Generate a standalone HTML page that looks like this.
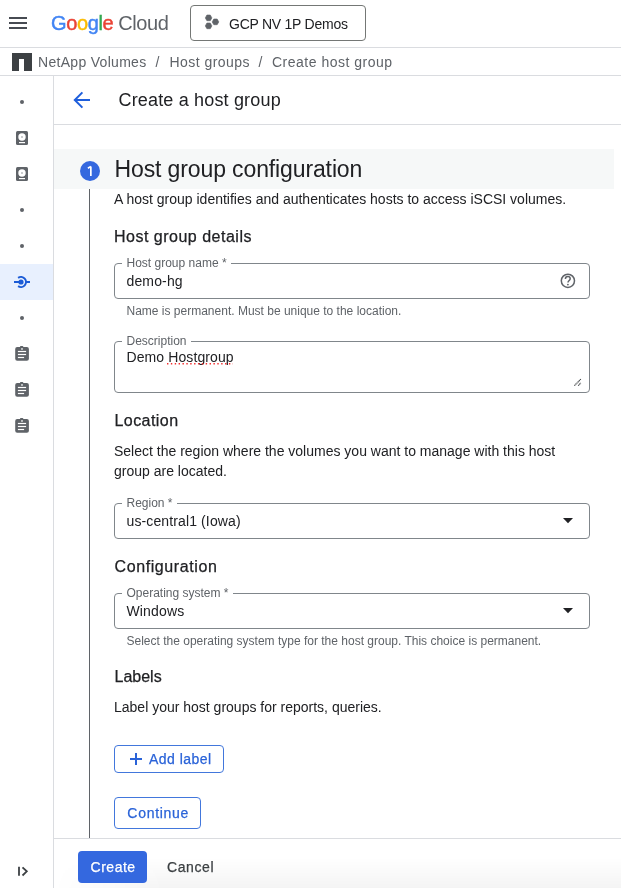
<!DOCTYPE html>
<html><head><meta charset="utf-8">
<style>
*{box-sizing:border-box;margin:0;padding:0}
html,body{will-change:transform;width:621px;height:888px;overflow:hidden;background:#fff;font-family:"Liberation Sans",sans-serif;color:#202124}
.a{position:absolute;white-space:nowrap;line-height:1}
.hl{position:absolute;background:#dadce0}
.box{position:absolute;border:1px solid #80868b;border-radius:4px}
.lbl{position:absolute;white-space:nowrap;line-height:1;font-size:12px;color:#5f6368;background:#fff;padding:0 4px 0 4.5px}
.ic{position:absolute;display:block}
.m{-webkit-text-stroke:0.25px currentColor}
</style></head><body>
<!-- top bar -->
<svg class="ic" style="left:0;top:0" width="40" height="47">
  <rect x="9" y="17" width="18" height="2" fill="#474b52"/>
  <rect x="9" y="22" width="18" height="2" fill="#474b52"/>
  <rect x="9" y="27" width="18" height="2" fill="#474b52"/>
</svg>
<div class="a" style="left:51px;top:12.7px;font-size:20px;letter-spacing:-0.4px"><span style="-webkit-text-stroke:0.45px currentColor"><span style="color:#4285f4">G</span><span style="color:#ea4335">o</span><span style="color:#fbbc04">o</span><span style="color:#4285f4">g</span><span style="color:#34a853">l</span><span style="color:#ea4335">e</span></span><span style="color:#5f6368;margin-left:5px">Cloud</span></div>
<div class="box" style="left:190px;top:5px;width:176px;height:36px;border-color:#747775"></div>
<svg class="ic" style="left:200px;top:10px" width="25" height="25">
  <g fill="#5f6368" stroke="#5f6368" stroke-width="0.6" stroke-linejoin="round">
  <polygon points="6.9,5 10.3,5 11.9,7.9 10.3,10.7 6.9,10.7 5.3,7.9"/>
  <polygon points="13.8,9 17.2,9 18.8,11.9 17.2,14.7 13.8,14.7 12.2,11.9"/>
  <polygon points="6.9,13 10.3,13 11.9,15.9 10.3,18.7 6.9,18.7 5.3,15.9"/>
  </g>
</svg>
<div class="a" style="left:229px;top:16.6px;font-size:14px;letter-spacing:-0.25px;color:#202124">GCP NV 1P Demos</div>
<div class="hl" style="left:0;top:47px;width:621px;height:1px"></div>

<!-- breadcrumb -->
<div class="a" style="left:12px;top:53px;width:20px;height:18px;background:#3c4043"></div>
<div class="a" style="left:19px;top:59px;width:5px;height:12px;background:#fff"></div>
<div class="a" style="left:38px;top:55.3px;font-size:14px;letter-spacing:0.3px;color:#5f6368">NetApp Volumes</div>
<div class="a" style="left:155.5px;top:55.3px;font-size:14px;color:#5f6368">/</div>
<div class="a" style="left:169.5px;top:55.3px;font-size:14px;letter-spacing:0.45px;color:#5f6368">Host groups</div>
<div class="a" style="left:258.5px;top:55.3px;font-size:14px;color:#5f6368">/</div>
<div class="a" style="left:272px;top:55.3px;font-size:14px;letter-spacing:0.5px;color:#5f6368">Create host group</div>
<div class="hl" style="left:0;top:75px;width:621px;height:1px"></div>

<!-- sidebar -->
<div class="hl" style="left:53px;top:76px;width:1px;height:812px"></div>
<div class="a" style="left:0;top:264px;width:53px;height:36px;background:#e8f0fe"></div>
<svg class="ic" style="left:0;top:76px" width="53" height="812">
  <g fill="#5f6368">
    <circle cx="22" cy="26" r="2"/>
    <!-- disk 1 -->
    <rect x="16" y="55" width="12" height="14" rx="1.5"/>
    <rect x="16" y="91" width="12" height="14" rx="1.5"/>
    <circle cx="22" cy="134" r="2"/>
    <circle cx="22" cy="170" r="2"/>
    <circle cx="22" cy="242" r="2"/>
    <!-- clipboards -->
    <rect x="15.2" y="271" width="13.7" height="13.7" rx="2"/>
    <rect x="20" y="270" width="3.3" height="2" rx="0.8"/>
    <rect x="15.2" y="307" width="13.7" height="13.7" rx="2"/>
    <rect x="20" y="306" width="3.3" height="2" rx="0.8"/>
    <rect x="15.2" y="343" width="13.7" height="13.7" rx="2"/>
    <rect x="20" y="342" width="3.3" height="2" rx="0.8"/>
  </g>
  <g fill="#fff">
    <circle cx="22" cy="61" r="3.7"/>
    <rect x="19" y="66" width="6" height="1.2"/>
    <circle cx="22" cy="97" r="3.7"/>
    <rect x="19" y="102" width="6" height="1.2"/>
  </g>
  <g fill="#8a8d91"><circle cx="22" cy="61" r="0.8"/><circle cx="22" cy="97" r="0.8"/></g>
  <g fill="#fff">
    <rect x="21.1" y="272" width="1.8" height="1.9" fill="#c8cacc"/>
    <rect x="17.9" y="274.9" width="8.2" height="1.2"/>
    <rect x="17.9" y="277.9" width="8.2" height="1.2"/>
    <rect x="17.9" y="280.9" width="6.2" height="1.2"/>
    <rect x="21.1" y="308" width="1.8" height="1.9" fill="#c8cacc"/>
    <rect x="17.9" y="310.9" width="8.2" height="1.2"/>
    <rect x="17.9" y="313.9" width="8.2" height="1.2"/>
    <rect x="17.9" y="316.9" width="6.2" height="1.2"/>
    <rect x="21.1" y="344" width="1.8" height="1.9" fill="#c8cacc"/>
    <rect x="17.9" y="346.9" width="8.2" height="1.2"/>
    <rect x="17.9" y="349.9" width="8.2" height="1.2"/>
    <rect x="17.9" y="352.9" width="6.2" height="1.2"/>
  </g>
  <!-- active icon -->
  <g stroke="#1b5bd6" fill="none" stroke-width="2">
    <line x1="14" y1="206" x2="20" y2="206"/><line x1="25.5" y1="206" x2="30" y2="206"/>
    <path d="M18.1 201.9 A5 5 0 1 1 18.1 210.1"/>
  </g>
  <circle cx="21" cy="206" r="2.6" fill="#1b5bd6"/>
  <!-- collapse -->
  <g stroke="#3c4043" fill="none" stroke-width="1.8">
    <line x1="19" y1="790.7" x2="19" y2="799.7"/>
    <path d="M22.5 791.3 L26.8 795.3 L22.5 799.5"/>
  </g>
</svg>

<!-- page header -->
<svg class="ic" style="left:70px;top:88px" width="24" height="24">
  <path d="M20 12 H5.5 M12.4 4.4 L4.8 12 L12.4 19.6" stroke="#1f5fdc" stroke-width="2" fill="none"/>
</svg>
<div class="a" style="left:118.5px;top:91px;font-size:18px;letter-spacing:0.17px;color:#202124">Create a host group</div>
<div class="hl" style="left:54px;top:124px;width:567px;height:1px"></div>

<!-- step header -->
<div class="a" style="left:54px;top:149px;width:560px;height:40px;background:#f6f8f8"></div>
<svg class="ic" style="left:78px;top:159px" width="24" height="24"><circle cx="12" cy="12" r="10" fill="#3468df"/><path d="M12.85 7.4 V17 M9.9 9.3 L12.9 7.4" stroke="#fff" stroke-width="1.7" fill="none"/></svg>
<div class="a" style="left:114.5px;top:157.5px;font-size:23px;letter-spacing:-0.12px">Host group configuration</div>
<div class="a" style="left:89px;top:189px;width:1px;height:649px;background:#5f6368"></div>

<div class="a" style="left:114px;top:192.4px;font-size:14px">A host group identifies and authenticates hosts to access iSCSI volumes.</div>
<div class="a m" style="left:114px;top:228.7px;font-size:16px;letter-spacing:0.5px">Host group details</div>

<!-- host group name -->
<div class="box" style="left:114px;top:263px;width:476px;height:36px"></div>
<div class="lbl" style="left:122px;top:257.2px">Host group name *</div>
<div class="a" style="left:126.5px;top:274.2px;font-size:14px;letter-spacing:0.15px">demo-hg</div>
<svg class="ic" style="left:555px;top:268px" width="25" height="25">
  <circle cx="12.9" cy="12.8" r="6.6" stroke="#5f6368" stroke-width="1.5" fill="none"/>
  <path d="M10.4 10.9 C10.4 9.3 11.5 8.5 12.8 8.5 C14.1 8.5 15.2 9.4 15.2 10.7 C15.2 12.4 13 12.6 13 14.6" stroke="#5f6368" stroke-width="1.5" fill="none"/>
  <circle cx="12.9" cy="16.6" r="0.9" fill="#5f6368"/>
</svg>
<div class="a" style="left:126.5px;top:305.4px;font-size:12px;color:#5f6368">Name is permanent. Must be unique to the location.</div>

<!-- description -->
<div class="box" style="left:114px;top:341px;width:476px;height:52px"></div>
<div class="lbl" style="left:122px;top:335px">Description</div>
<div class="a" style="left:126.5px;top:350px;font-size:14px;letter-spacing:0.1px">Demo Hostgroup</div>
<svg class="ic" style="left:160px;top:358px" width="80" height="10"><line x1="7" y1="5.8" x2="73" y2="5.8" stroke="#f22c2c" stroke-width="1.4" stroke-dasharray="1.4 2.47"/></svg>
<svg class="ic" style="left:565px;top:370px" width="30" height="30">
  <path d="M9.4 15.6 L15.8 9.2 M13.2 15.6 L15.8 13" stroke="#3c4043" stroke-width="1.2" stroke-dasharray="1.1 0.5" fill="none"/>
</svg>

<!-- location -->
<div class="a m" style="left:114.5px;top:412.9px;font-size:16px;letter-spacing:0.44px">Location</div>
<div class="a" style="left:114px;top:443.5px;font-size:14px">Select the region where the volumes you want to manage with this host</div>
<div class="a" style="left:114px;top:464px;font-size:14px">group are located.</div>

<div class="box" style="left:114px;top:503px;width:476px;height:36px"></div>
<div class="lbl" style="left:122px;top:496.7px">Region *</div>
<div class="a" style="left:126.5px;top:514.4px;font-size:14px;letter-spacing:0.12px">us-central1 (Iowa)</div>
<svg class="ic" style="left:560px;top:515px" width="16" height="12"><polygon points="3,3 13,3 8,8.3" fill="#202124"/></svg>

<!-- configuration -->
<div class="a m" style="left:114.5px;top:559.4px;font-size:16px;letter-spacing:0.6px">Configuration</div>
<div class="box" style="left:114px;top:593px;width:476px;height:36px"></div>
<div class="lbl" style="left:122px;top:586.7px">Operating system *</div>
<div class="a" style="left:126.5px;top:603.9px;font-size:14px;letter-spacing:0.15px">Windows</div>
<svg class="ic" style="left:560px;top:605px" width="16" height="12"><polygon points="3,3 13,3 8,8.3" fill="#202124"/></svg>
<div class="a" style="left:126.5px;top:634.6px;font-size:12px;color:#5f6368">Select the operating system type for the host group. This choice is permanent.</div>

<!-- labels -->
<div class="a m" style="left:114.5px;top:669.4px;font-size:16px">Labels</div>
<div class="a" style="left:114px;top:700.4px;font-size:14px">Label your host groups for reports, queries.</div>

<div class="box" style="left:114px;top:745px;width:110px;height:28px;border-color:#4277dc"></div>
<svg class="ic" style="left:130px;top:753px" width="12" height="12"><rect x="0" y="5" width="12" height="2" fill="#2a63d8"/><rect x="5" y="0" width="2" height="12" fill="#2a63d8"/></svg>
<div class="a m" style="left:149px;top:751.5px;font-size:14px;letter-spacing:0.47px;color:#2a63d8">Add label</div>

<div class="box" style="left:114px;top:797px;width:87px;height:32px;border-color:#4277dc"></div>
<div class="a m" style="left:127.3px;top:805.6px;font-size:14px;letter-spacing:0.72px;color:#2a63d8">Continue</div>

<!-- footer -->
<div class="hl" style="left:54px;top:838px;width:567px;height:1px"></div>
<div class="a" style="left:54px;top:858px;width:567px;height:30px;background:linear-gradient(to bottom,rgba(0,0,0,0),rgba(0,0,0,0.045));-webkit-mask-image:linear-gradient(to right,transparent 0,#000 110px)"></div>
<div class="a" style="left:78px;top:851px;width:69px;height:32px;border-radius:4px;background:#3468df"></div>
<div class="a m" style="left:90.6px;top:859.8px;font-size:14px;letter-spacing:0.5px;color:#fff">Create</div>
<div class="a m" style="left:167px;top:859.8px;font-size:14px;letter-spacing:0.6px;color:#3c4043">Cancel</div>
</body></html>
